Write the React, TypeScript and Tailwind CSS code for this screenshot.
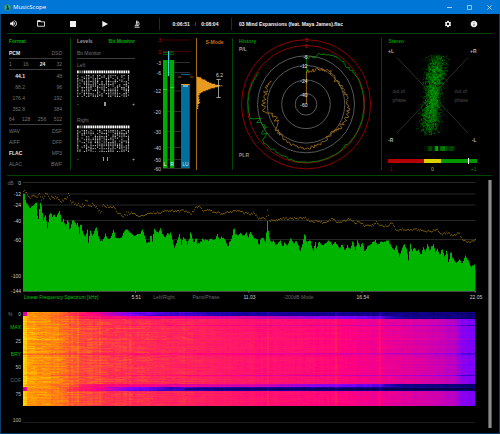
import React, { useMemo, useState } from 'react';
import { MdVolumeUp, MdSettings, MdInfo } from 'react-icons/md';
import clsx from 'clsx';

type Point = [number, number];

// Small seeded generator so every render draws the same signal
function createRandom(seed: number) {
  let s = seed;
  return () => {
    s = (s * 1664525 + 1013904223) % 4294967296;
    return s / 4294967296;
  };
}

function interpolate(points: Point[], x: number) {
  if (x <= points[0][0]) return points[0][1];
  for (let i = 1; i < points.length; i++) {
    const [x1, y1] = points[i];
    if (x <= x1) {
      const [x0, y0] = points[i - 1];
      return y0 + ((y1 - y0) * (x - x0)) / (x1 - x0);
    }
  }
  return points[points.length - 1][1];
}

/* ------------------------------ Title bar ------------------------------ */

const TitleBar = () => (
  <header className="flex h-[14px] items-center bg-[#0077d6] text-white">
    <svg viewBox="0 0 12 12" className="ml-1 h-[7px] w-[7px]" aria-hidden="true">
      <circle cx="6" cy="6" r="6" fill="#2b8f86" />
      <path d="M5 1.5 7 3v3l2 2-1 2H4l1-3-1-2z" fill="#0c3a3a" />
      <path d="M2 4l2 1-1 3M8 3l2 2" stroke="#7fd6b0" strokeWidth="1" fill="none" />
    </svg>
    <h1 className="ml-[2px] font-['Open_Sans',sans-serif] text-[6px] leading-[8px]">MusicScope</h1>
    <div className="ml-auto mr-px flex">
      <button aria-label="Minimize" className="flex h-[14px] w-5 items-center justify-center">
        <svg viewBox="0 0 5 5" className="h-[5px] w-[5px]"><path d="M0 2.5h5" stroke="#cfe6fa" strokeWidth="0.8" /></svg>
      </button>
      <button aria-label="Maximize" className="flex h-[14px] w-5 items-center justify-center">
        <svg viewBox="0 0 5 5" className="h-[5px] w-[5px]"><path d="M.5.5h4v4h-4z" fill="none" stroke="#cfe6fa" strokeWidth="0.7" /></svg>
      </button>
      <button aria-label="Close" className="flex h-[14px] w-5 items-center justify-center">
        <svg viewBox="0 0 5 5" className="h-[5px] w-[5px]"><path d="M.3.3l4.4 4.4M4.7.3.3 4.7" stroke="#e4f1fc" strokeWidth="0.7" /></svg>
      </button>
    </div>
  </header>
);

/* ------------------------------- Toolbar ------------------------------- */

const FolderIcon = () => (
  <svg viewBox="0 0 16 14" className="h-[7px] w-2" aria-hidden="true">
    <path d="M1 12.5V1.5h5.5l1.6 2.2H15v8.8z" fill="none" stroke="currentColor" strokeWidth="1.7" />
    <path d="M1 1h5.5l1.8 3H1z" fill="currentColor" />
  </svg>
);

const MicroscopeIcon = () => (
  <svg viewBox="0 0 14 18" className="h-2 w-[6px]" aria-hidden="true">
    <path d="M6.5 1v7M9 3c3.5 2 3.5 7 1 9.5M3.5 9.5h6M2 12.8h9M1 16.5h12" fill="none" stroke="currentColor" strokeWidth="2" />
    <path d="M5 2.5h3.4V8H5z" fill="currentColor" />
  </svg>
);

const Toolbar = () => (
  <div className="flex h-[19px] items-center text-[#f2f2f2]">
    <button aria-label="Volume" className="flex w-6 justify-center"><MdVolumeUp size={9} /></button>
    <button aria-label="Open file" className="flex w-8 justify-center"><FolderIcon /></button>
    <button aria-label="Stop" className="flex w-8 justify-center">
      <svg viewBox="0 0 6 6" className="h-[6px] w-[6px]" aria-hidden="true"><path d="M0 0h6v6H0z" fill="currentColor" /></svg>
    </button>
    <button aria-label="Play" className="flex w-8 justify-center">
      <svg viewBox="0 0 6 6" className="h-[6px] w-[6px]" aria-hidden="true"><path d="M.3 0 6 3 .3 6z" fill="currentColor" /></svg>
    </button>
    <button aria-label="Analyze" className="flex w-8 justify-center"><MicroscopeIcon /></button>
    <div className="ml-[6px] flex h-3 w-[73px] items-center justify-center gap-[5px] border-x border-[#004600] font-bold">
      <span>0:06:51</span>
      <span className="font-normal text-[#aaa]">/</span>
      <span>0:08:04</span>
    </div>
    <p className="truncate pl-[7px] font-bold">03 Mind Expansions (feat. Maya James).flac</p>
    <div className="ml-auto mr-3 flex">
      <button aria-label="Settings" className="flex w-[26px] justify-center"><MdSettings size={8} /></button>
      <button aria-label="About" className="flex w-[26px] justify-center"><MdInfo size={8} /></button>
    </div>
  </div>
);

/* -------------------------------- Format ------------------------------- */

const formatRows: { cells: string[]; active?: string; line?: boolean; rates?: boolean }[] = [
  { cells: ['PCM', 'DSD'], active: 'PCM', line: true },
  { cells: ['1', '16', '24', '32'], active: '24', line: true },
  { cells: ['44.1', '48'], active: '44.1', rates: true },
  { cells: ['88.2', '96'], rates: true },
  { cells: ['176.4', '192'], rates: true },
  { cells: ['352.8', '384'], rates: true },
  { cells: ['64', '128', '256', '512'], line: true },
  { cells: ['WAV', 'DSF'] },
  { cells: ['AIFF', 'DFF'] },
  { cells: ['FLAC', 'MP3'], active: 'FLAC' },
  { cells: ['ALAC', 'BWF'] },
];

const FormatPanel = () => (
  <section className="min-w-0 border-r border-[#004600] pl-[2px] pr-2">
    <h2 className="mb-[3px] h-[7px] font-bold text-[#00b000]">Format</h2>
    {formatRows.map((row) => (
      <div
        key={row.cells.join()}
        className={clsx('flex h-[11px] items-center justify-between', row.line && 'border-b border-[#3c3c3c]')}
      >
        {row.cells.map((cell, i) => (
          <span
            key={cell}
            className={clsx(
              row.rates && i === 0 && 'w-4 text-right',
              cell === row.active ? 'font-bold text-[#e6e6e6]' : 'text-[#727272]'
            )}
          >
            {cell}
          </span>
        ))}
      </div>
    ))}
  </section>
);

/* ----------------------------- Bit monitor ----------------------------- */

const BitChannel = ({ name, seed, marks }: { name: string; seed: number; marks: number[] }) => {
  const dots = useMemo(() => {
    const rand = createRandom(seed);
    const out: { x: number; y: number; o: number }[] = [];
    for (let c = 0; c < 24; c++) {
      const density = c === 0 ? 0.95 : c < 3 ? 0.4 : 0.5 + rand() * 0.35;
      for (let r = 0; r < 15; r++) {
        if (rand() < density) out.push({ x: c * 2.2 + 0.2, y: 5 + r * 1.5, o: 0.5 + rand() * 0.5 });
      }
    }
    return out;
  }, [seed]);

  return (
    <div className="mb-[3px]">
      <h3 className="flex h-[11px] items-center text-[#727272]">{name}</h3>
      <svg viewBox="0 0 53 27" className="block w-11/12" role="img" aria-label={`${name} bits`}>
        {Array.from({ length: 24 }, (_, i) => (
          <rect key={i} x={i * 2.2 + 0.1} y="0.5" width="1.6" height="2.8" fill={i > 0 && i < 3 ? '#888' : '#fff'} />
        ))}
        {dots.map((d, i) => (
          <rect key={i} x={d.x} y={d.y} width="1.1" height="1.1" fill="#eee" opacity={d.o} />
        ))}
      </svg>
      <div className="flex h-[14px] items-center justify-between text-[#bbb]">
        <span>-</span>
        <span className="flex gap-[3px]">
          {marks.map((w, i) => (
            <i key={i} className={clsx('h-1 bg-[#999]', w === 2 ? 'w-[2px]' : 'w-px')} />
          ))}
        </span>
        <span>+</span>
      </div>
    </div>
  );
};

const BitMonitorPanel = () => {
  const [tab, setTab] = useState<'levels' | 'bits'>('bits');
  return (
    <section className="min-w-0 pl-[6px] pr-3">
      <div className="mb-[3px] flex h-[7px] items-start justify-between font-bold">
        <button onClick={() => setTab('levels')} className={tab === 'levels' ? 'text-[#00b000]' : 'text-[#999]'}>Levels</button>
        <button onClick={() => setTab('bits')} className={tab === 'bits' ? 'text-[#00b000]' : 'text-[#999]'}>Bit Monitor</button>
      </div>
      <p className="flex h-[11px] items-center border-b border-[#3c3c3c] text-[#727272]">Bit Monitor</p>
      <BitChannel name="Left" seed={11} marks={[2]} />
      <BitChannel name="Right" seed={47} marks={[1, 1]} />
    </section>
  );
};

/* -------------------------------- Meters ------------------------------- */

const meterScale: { label: string; y: number }[] = [
  { label: '3', y: 40 },
  { label: '0', y: 51.5 },
  { label: '-3', y: 62.5 },
  { label: '-6', y: 72.5 },
  { label: '-12', y: 91 },
  { label: '-20', y: 111.5 },
  { label: '-30', y: 131.5 },
  { label: '-40', y: 147.5 },
  { label: '-50', y: 159.5 },
  { label: '-60', y: 168.5 },
];

const Meters = () => (
  <svg viewBox="147 38 49 132" className="block w-full overflow-visible" role="img" aria-label="Level meters">
    {meterScale.map((m, i) => (
      <g key={m.label}>
        <path d={`M163 ${m.y}H190`} stroke={i < 2 ? '#5c0000' : '#3a3a3a'} strokeWidth="0.8" />
        <text x="161" y={m.y + 2} textAnchor="end" fill={i < 2 ? '#d00000' : '#ccc'}>{m.label}</text>
      </g>
    ))}
    <path d="M163 60h4.4v108H163zM170 60h4.2v108H170z" fill="#00aa00" />
    <path d="M163 52.4h4.4M163 54.4h4.4M170 52h4.2M170 54.2h4.2" stroke="#00a000" strokeWidth="0.7" />
    <path d="M163 89.4h4.4M170 87.4h4.2" stroke="#30f030" strokeWidth="0.8" />
    <path d="M168.6 51v25" stroke="#4cc8f0" strokeWidth="1.3" />
    <path d="M181 84.5h8.8V168H181z" fill="#006f9c" />
    <path d="M181 84.5h8.8" stroke="#e89a20" strokeWidth="1" />
    <path d="M183 86h5" stroke="#e0e8ea" strokeWidth="1" />
    <path d="M181 74.4h8.8" stroke="#006f9c" strokeWidth="1" />
    <path d="M178 77h3.4M190 77h3.4" stroke="#8a5510" strokeWidth="1.2" />
    <text x="163.6" y="166" fill="#f4f4f4">L</text>
    <text x="170.2" y="166" fill="#f4f4f4">R</text>
    <text x="185.4" y="166" textAnchor="middle" fill="#dcebf2">LU</text>
  </svg>
);

const SMode = () => (
  <div className="min-w-0 border-l border-[#a86a14]">
    <button className="block h-2 w-full text-center font-bold text-[#b87416]">S-Mode</button>
    <svg viewBox="197 46 35 122" className="block w-full" role="img" aria-label="Loudness distribution">
      <path
        d="M196.5 76.7h1.5l1 .6h2v1.3h1.5v1h3v1.1h1.4v1h2v1h2.6v1h3.6v1h3.4v.8h4v.8h-3.6v1h-4.2v1h-4v1h-2.4v1h-2.6v1h-2.8v1h-1.6v1h-2v1h.6v1h-1.4v1.4h.8v1.2h-.6v1.4h1.2v1.2h-.9v1.4h1.2v1h-1v1h-1.4v1.4h.8v1.3h-1v1h.6v1.4h-1.3v1.4h-1.9z"
        fill="#e89a20"
      />
      <path d="M218.5 79.5v18M216.4 79.5h4.4M216.4 97.5h4.4M217 85.5h3" stroke="#b8b8b8" strokeWidth="0.8" />
      <text x="219.6" y="77.4" textAnchor="middle" fill="#d8d8d8">6.2</text>
    </svg>
  </div>
);

/* ------------------------------- History ------------------------------- */

const CX = 306;
const CY = 104.3;

// [angle in degrees, radius, jitter]
const peakTrace: [number, number, number][] = [
  [0, 46, 1], [5, 47, 3], [11, 48, 4], [13, 52, 1], [24, 54, 1.5], [30, 56, 1], [38, 56, 1.5], [48, 55.5, 2.5], [55, 57, 1.5],
  [65, 58, 0.4], [132, 58, 0.4], [136, 56.5, 1.5], [142, 58, 0.4], [190, 58, 0.4], [200, 57, 1.5], [215, 56, 1.2], [230, 57, 1.5],
  [233, 52, 5], [240, 48, 5], [246, 50, 5], [253, 50, 5], [255, 57.5, 0.5], [280, 58, 0.4], [304, 57, 0.4],
];
const loudnessTrace: [number, number, number][] = [
  [0, 33, 2], [10, 34, 3], [25, 39, 3], [40, 41, 3], [50, 38, 3], [65, 40, 2], [85, 41.5, 2.5], [105, 43, 3], [125, 41, 3],
  [140, 39, 3.5], [160, 42, 2.5], [180, 44.5, 2], [200, 42.5, 2], [220, 40, 2.5], [232, 39, 3], [240, 33, 4], [252, 34, 3],
  [256, 38, 4], [260, 43, 3], [275, 42, 3], [290, 43, 4], [304, 43, 2],
];

function polarPath(trace: [number, number, number][], seed: number) {
  const rand = createRandom(seed);
  const radius = trace.map(([a, r]) => [a, r] as Point);
  const jitter = trace.map(([a, , j]) => [a, j] as Point);
  const last = trace[trace.length - 1][0];
  const parts: string[] = [];
  for (let a = 0; a <= last; a += 1.6) {
    const r = interpolate(radius, a) + (rand() - 0.5) * interpolate(jitter, a) * 1.4;
    const t = (a * Math.PI) / 180;
    parts.push(`${(CX + r * Math.sin(t)).toFixed(1)} ${(CY - r * Math.cos(t)).toFixed(1)}`);
  }
  return 'M' + parts.join('L');
}

const rings = [
  { label: '3', r: 64.6, y: 40 },
  { label: '0', r: 58.8, y: 46 },
  { label: '-6', r: 48.5, y: 56.5 },
  { label: '-12', r: 38.8, y: 66 },
  { label: '-24', r: 24.3, y: 80.5 },
  { label: '-40', r: 10.8, y: 94.5 },
  { label: '-60', r: 0, y: 104.8 },
];

const HistoryPanel = () => {
  const peak = useMemo(() => polarPath(peakTrace, 5), []);
  const loudness = useMemo(() => polarPath(loudnessTrace, 9), []);
  return (
    <section className="min-w-0 border-r border-[#004600]">
      <svg viewBox="233 38 148 132" className="block w-full" role="img" aria-label="History">
        <text x="239" y="43" className="font-bold" fill="#009400">History</text>
        <text x="239" y="51" className="font-bold" fill="#a0a0a0">P/L</text>
        <text x="239" y="157" className="font-bold" fill="#8c8c8c">PLR</text>
        {rings.map((ring, i) => (
          <circle key={ring.label} cx={CX} cy={CY} r={ring.r} fill="none" stroke={i < 2 ? '#900000' : '#585858'} strokeWidth="1" />
        ))}
        <path d="M306.4 57v24" stroke="#007800" strokeWidth="0.9" />
        <path d="M306.4 72v32" stroke="#a87018" strokeWidth="0.9" />
        <path d={peak} fill="none" stroke="#009c00" strokeWidth="0.8" />
        <path d={loudness} fill="none" stroke="#b07618" strokeWidth="0.8" />
        {rings.map((ring, i) => (
          <text key={ring.label} x="307.6" y={ring.y + 2} textAnchor="end" fill={i < 2 ? '#e00000' : '#e6e6e6'}>{ring.label}</text>
        ))}
      </svg>
    </section>
  );
};

/* -------------------------------- Stereo ------------------------------- */

function gonioPoints() {
  const rand = createRandom(77);
  const gauss = () => (rand() + rand() + rand() + rand() - 2) / 2;
  const groups = ['', '', ''];
  for (let i = 0; i < 2900; i++) {
    const t = gauss() * 1.15 + (rand() < 0.5 ? -0.45 : 0.42);
    if (Math.abs(t) > 1) continue;
    const waist = 10.5 + 6 * Math.abs(t) * (1.35 - Math.abs(t));
    const x = 432.9 - t * 4.4 + gauss() * waist * 1.25;
    const y = 95 + t * 40;
    groups[i % 3] += `M${x.toFixed(1)} ${y.toFixed(1)}h.7`;
  }
  return groups;
}

const StereoPanel = () => {
  const groups = useMemo(gonioPoints, []);
  const bars = useMemo(() => {
    const rand = createRandom(21);
    return Array.from({ length: 27 }, (_, i) => ({
      x: 424.4 + i * 1.15,
      o: Math.max(0.12, (1.2 - Math.abs(i - 13) / 14) * (rand() < 0.3 ? 0.15 : 0.5 + rand() * 0.5)),
    }));
  }, []);
  return (
    <section className="min-w-0">
      <svg viewBox="382 38 110 132" className="block w-full overflow-visible" role="img" aria-label="Stereo">
        <text x="388.5" y="43" className="font-bold" fill="#009400">Stereo</text>
        <path d="M397 57.5 468 133M468 57.5 397 133" stroke="#363636" strokeWidth="0.8" />
        <g className="font-bold" fill="#b4b4b4">
          <text x="388" y="53">+L</text>
          <text x="476.5" y="53" textAnchor="end">+R</text>
          <text x="388" y="141.5">-R</text>
          <text x="476.5" y="141.5" textAnchor="end">-L</text>
        </g>
        <g fill="#4c4c4c">
          <text x="392.5" y="93">out of</text>
          <text x="392.5" y="102">phase</text>
          <text x="454.5" y="93">out of</text>
          <text x="454.5" y="102">phase</text>
        </g>
        <path d={groups[0]} stroke="#009c00" strokeWidth="0.7" />
        <path d={groups[1]} stroke="#007000" strokeWidth="0.7" />
        <path d={groups[2]} stroke="#00c800" strokeWidth="0.6" opacity="0.8" />
        {bars.map((b) => (
          <rect key={b.x} x={b.x} y="146" width="0.9" height="5" fill="#00e000" opacity={b.o} />
        ))}
        <path d="M388 159h36v4h-36z" fill="#b40000" />
        <path d="M424 159h17v4h-17z" fill="#dcd000" />
        <path d="M441 159h36v4h-36z" fill="#009600" />
        <path d="M468.5 158v6" stroke="#fff" strokeWidth="1" />
        <text x="388" y="170.5" fill="#b00000">-1</text>
        <text x="432.5" y="170.5" textAnchor="middle" fill="#c8be00">0</text>
        <text x="476.5" y="170.5" textAnchor="end" fill="#009000">+1</text>
      </svg>
    </section>
  );
};

/* ------------------------------- Spectrum ------------------------------ */

// Control points for the live spectrum, three units per pixel
const spectrumPoints: Point[] = [
  [68, 68], [73, 64], [76, 85], [82, 100], [90, 108], [98, 102], [104, 96], [109, 90], [112, 130], [115, 143], [120, 92], [124, 100],
  [130, 145], [136, 128], [142, 170], [148, 130], [152, 122], [158, 135], [162, 128], [168, 138], [174, 122], [179, 116], [184, 150],
  [190, 143], [197, 165], [203, 138], [209, 178], [215, 150], [221, 142], [228, 158], [233, 150], [238, 185], [242, 150], [248, 182],
  [256, 195], [262, 175], [265, 210], [270, 176], [278, 190], [284, 175], [290, 165], [294, 190], [300, 205], [308, 208], [316, 185],
  [322, 200], [332, 198], [340, 172], [346, 195], [355, 200], [365, 195], [372, 178], [380, 170], [386, 180], [395, 185], [403, 193],
  [412, 185], [420, 185], [428, 172], [434, 195], [440, 215], [448, 210], [453, 178], [456, 214], [462, 170], [468, 180], [474, 182],
  [482, 168], [488, 190], [496, 195], [502, 185], [508, 188], [512, 180], [517, 205], [524, 228], [530, 210], [538, 188], [544, 218],
  [550, 195], [556, 200], [562, 215], [568, 200], [572, 178], [578, 205], [582, 215], [588, 195], [592, 215], [600, 212], [608, 200],
  [618, 205], [626, 205], [634, 200], [644, 205], [652, 188], [660, 205], [664, 195], [672, 200], [678, 210], [683, 228], [688, 208],
  [696, 200], [701, 162], [706, 185], [714, 190], [722, 182], [730, 192], [738, 180], [744, 200], [750, 178], [756, 190], [764, 200],
  [772, 205], [777, 225], [782, 200], [790, 198], [796, 210], [802, 148], [808, 200], [814, 210], [820, 205], [828, 220], [840, 205],
  [848, 225], [854, 210], [862, 220], [872, 200], [880, 215], [890, 205], [900, 238], [908, 215], [914, 180], [920, 212], [930, 205],
  [940, 238], [946, 210], [950, 235], [956, 205], [966, 222], [976, 215], [986, 205], [998, 220], [1006, 210], [1018, 232], [1026, 215],
  [1034, 235], [1042, 220], [1050, 235], [1058, 205], [1066, 235], [1072, 207], [1080, 225], [1088, 210], [1094, 240], [1102, 225],
  [1114, 215], [1126, 205], [1134, 220], [1142, 208], [1154, 210], [1164, 205], [1174, 225], [1184, 235], [1188, 215], [1198, 255],
  [1206, 230], [1212, 215], [1220, 235], [1226, 272], [1230, 208], [1236, 240], [1242, 225], [1250, 240], [1256, 232], [1262, 250],
  [1270, 225], [1276, 240], [1282, 215], [1288, 235], [1294, 225], [1300, 215], [1306, 240], [1312, 232], [1320, 250], [1326, 230],
  [1334, 255], [1340, 232], [1346, 275], [1352, 235], [1358, 260], [1370, 275], [1380, 262], [1386, 275], [1396, 250], [1406, 270],
  [1414, 285], [1422, 275], [1426, 290],
];

const maxPoints: Point[] = [
  [68, 65], [72, 50], [78, 62], [90, 75], [105, 72], [118, 68], [125, 85], [140, 62], [150, 78], [165, 75], [180, 88], [195, 82],
  [205, 70], [215, 90], [235, 100], [250, 102], [257, 88], [265, 95], [285, 103], [300, 120], [312, 98], [325, 105], [340, 102],
  [350, 118], [368, 135], [380, 125], [395, 122], [415, 132], [432, 133], [450, 122], [480, 122], [500, 115], [525, 118], [550, 116],
  [575, 125], [585, 108], [597, 103], [610, 118], [625, 112], [640, 120], [670, 125], [690, 120], [710, 115], [730, 122], [750, 127],
  [760, 122], [775, 138], [798, 140], [802, 112], [808, 145], [830, 145], [850, 140], [880, 140], [915, 137], [930, 148], [955, 148],
  [975, 155], [995, 140], [1015, 152], [1050, 140], [1065, 155], [1075, 148], [1095, 162], [1120, 160], [1128, 150], [1145, 162],
  [1165, 162], [1172, 150], [1190, 175], [1210, 172], [1225, 175], [1250, 172], [1270, 178], [1295, 178], [1310, 172], [1325, 188],
  [1340, 182], [1360, 192], [1375, 182], [1390, 205], [1410, 212], [1426, 203],
];

const dbLines = [
  { label: '0', y: 182.5, line: true },
  { label: '-12', y: 194, line: true },
  { label: '-24', y: 205, line: true },
  { label: '-40', y: 220.5, line: true },
  { label: '-60', y: 239.5, line: true },
  { label: '-100', y: 276, line: false },
  { label: '-144', y: 290.5, line: false },
];

function buildSpectrum() {
  const rand = createRandom(3);
  let area = 'M23 291';
  let dots = '';
  for (let x = 23; x < 475.5; x++) {
    const y = 172 + interpolate(spectrumPoints, x * 3 + 1) / 3 + (rand() - 0.5) * 1.6;
    area += `V${y.toFixed(1)}H${x + 1 > 475.5 ? 475.5 : x + 1}`;
    const spread = x < 130 ? 4 : 2;
    const m = 172 + interpolate(maxPoints, x * 3 + 1) / 3 + (rand() - 0.5) * spread;
    dots += `M${x} ${m.toFixed(1)}h1`;
  }
  return { area: area + 'V291z', dots };
}

const SpectrumChart = () => {
  const { area, dots } = useMemo(buildSpectrum, []);
  return (
    <svg viewBox="7 180 470 112" className="block w-full overflow-visible" role="img" aria-label="Linear frequency spectrum">
      <text x="7.5" y="184.5" fill="#6c6c6c">dB</text>
      {dbLines.map((l) => (
        <g key={l.label}>
          {l.line && <path d={`M23 ${l.y}H475.5`} stroke="#262626" strokeWidth="1" />}
          <text x="21" y={l.y + 2} textAnchor="end" fill="#ccc">{l.label}</text>
        </g>
      ))}
      <path d={area} fill="#00b400" />
      <path d={dots} stroke="#8a6408" strokeWidth="0.9" />
      <path d="M23 291.3H475.5M135.5 291v2M249 291v2M362 291v2M475.2 291v2" stroke="#8a9a8a" strokeWidth="0.6" />
    </svg>
  );
};

const SpectrumAxis = () => (
  <div className="grid h-[9px] grid-cols-4 pl-4 pr-px text-[#686868]">
    <div className="flex items-center justify-between pl-px">
      <button className="whitespace-nowrap text-[#00c800]">Linear Frequency Spectrum [kHz]</button>
      <span className="translate-x-1/2 text-[#ccc]">5.51</span>
    </div>
    <div className="flex items-center justify-between pl-[17px]">
      <button>Left/Right</button>
      <button>Pans/Phase</button>
      <span className="translate-x-1/2 text-[#ccc]">11.03</span>
    </div>
    <div className="flex items-center justify-between pl-[34px]">
      <button>-200dB Mode</button>
      <span className="translate-x-1/2 text-[#ccc]">16.54</span>
    </div>
    <div className="flex items-center justify-end">
      <span className="translate-x-1/2 text-[#ccc]">22.05</span>
    </div>
  </div>
);

/* ------------------------------ Spectrogram ---------------------------- */

const heatStops: [number, number[]][] = [
  [0, [0, 0, 70]],
  [0.15, [24, 0, 165]],
  [0.3, [122, 0, 255]],
  [0.45, [190, 0, 190]],
  [0.6, [255, 0, 128]],
  [0.75, [255, 48, 78]],
  [0.85, [255, 108, 34]],
  [0.93, [255, 158, 0]],
  [1, [255, 216, 0]],
];

function heatColor(v: number) {
  const rgb = [0, 1, 2].map((c) => Math.round(interpolate(heatStops.map(([s, k]) => [s, k[c]] as Point), v)));
  return `rgb(${rgb.join(',')})`;
}

const bodyLevel: Point[] = [
  [0, 1], [2, 0.98], [4, 0.94], [17, 0.91], [37, 0.875], [47, 0.82], [77, 0.775], [107, 0.745], [157, 0.715], [227, 0.66],
  [297, 0.63], [350, 0.57], [407, 0.5], [430, 0.44], [438, 0.34], [453, 0.3],
];
const quietLevel: Point[] = [
  [0, 0.5], [2, 0.55], [3, 0.92], [35, 0.86], [55, 0.7], [80, 0.52], [105, 0.3], [150, 0.2], [220, 0.14], [453, 0.07],
];
const fadeLevel: Point[] = [
  [0, 0.98], [5, 0.92], [45, 0.82], [65, 0.65], [140, 0.56], [227, 0.5], [290, 0.35], [350, 0.25], [380, 0.1], [453, 0.06],
];

const ROWS = 94;
const COLS = 226;
const LEVELS = 48;

// Cells are grouped by colour, one path each, with equal neighbours merged
function buildHeatmap() {
  const rand = createRandom(123);
  const paths: string[] = Array(LEVELS + 1).fill('');
  const colShift = Array.from({ length: COLS }, () => (rand() - 0.5) * 0.03);
  [17, 24, 27, 38, 53, 62].forEach((c) => (colShift[c] += 0.03));
  [80, 155, 177].forEach((c) => (colShift[c] += 0.025));
  [122, 156, 178].forEach((c) => (colShift[c] += 0.055));
  for (let r = 0; r < ROWS; r++) {
    let rowShift = (rand() - 0.5) * 0.04;
    if (r === 13 || r === 41 || r === 63) rowShift -= 0.12;
    if (r === 42) rowShift -= 0.05;
    const quiet = r < 4 || (r >= 75 && r < 79);
    const fade = (r >= 4 && r < 7) || (r >= 72 && r < 75);
    const table = quiet ? quietLevel : fade ? fadeLevel : bodyLevel;
    let streak = 0;
    let start = 0;
    let prev = -1;
    for (let c = 0; c <= COLS; c++) {
      let level = -1;
      if (c < COLS) {
        if (rand() < 0.35) streak = (rand() - 0.5) * (c < 90 ? 0.07 : 0.03);
        let v = interpolate(table, c * 2) + streak + colShift[c];
        v += r === 13 || r === 41 || r === 63 ? rowShift * Math.min(1, 0.3 + c / 160) : rowShift;
        if (r >= 76 && r < 78 && c > 80) v -= 0.08;
        level = Math.round(Math.max(0, Math.min(1, v)) * LEVELS);
      }
      if (level !== prev) {
        if (prev >= 0) paths[prev] += `M${start * 2} ${r}h${(c - start) * 2}v1h-${(c - start) * 2}z`;
        start = c;
        prev = level;
      }
    }
  }
  return paths;
}

const Spectrogram = () => {
  const paths = useMemo(buildHeatmap, []);
  return (
    <svg viewBox="0 0 454 111" className="mt-px block min-w-0 flex-1 self-start" shapeRendering="crispEdges" role="img" aria-label="Spectrogram">
      {paths.map((d, i) => d && <path key={i} d={d} fill={heatColor(i / LEVELS)} />)}
      <path d="M0 110h452v1H0z" fill="#1c1c1c" />
    </svg>
  );
};

const SpectrogramLabels = () => (
  <div className="flex w-4 flex-col items-end justify-between pr-[2px] text-[#bbb]">
    <div className="flex w-full justify-between pl-px"><span className="text-[#777]">%</span><span>0</span></div>
    <button className="text-[#00c000]">MAX</button>
    <span>25</span>
    <button className="text-[#00c000]">BRY</button>
    <span>50</span>
    <button className="text-[#686868]">COF</button>
    <span>75</span>
    <span aria-hidden="true">&nbsp;</span>
    <span>100</span>
  </div>
);

/* --------------------------------- App --------------------------------- */

function App() {
  return (
    <div className="flex min-h-screen flex-col bg-black font-['Liberation_Sans',Arial,sans-serif] text-[5px] leading-[6px] text-[#eee]">
      <TitleBar />
      <div className="flex flex-grow flex-col border-x border-b border-[#0a3d6b]">
        <Toolbar />
        <main className="pl-[6px] pr-[7px]">
          <div className="grid grid-cols-[64fr_76fr_86fr_149fr_110fr] border-y border-[#004600] pb-[5px] pt-1">
            <FormatPanel />
            <BitMonitorPanel />
            <section className="grid min-w-0 grid-cols-[49fr_36fr] border-r border-[#004600]">
              <Meters />
              <SMode />
            </section>
            <HistoryPanel />
            <StereoPanel />
          </div>

          <div className="flex gap-[11px] pt-1">
            <div className="min-w-0 flex-1 pb-[5px]">
              <SpectrumChart />
              <SpectrumAxis />
              <div className="mt-[10px] flex">
                <SpectrogramLabels />
                <Spectrogram />
              </div>
            </div>
            <div className="w-1 border-x border-[#555] bg-[#8c8c8c]" />
          </div>
        </main>
      </div>
    </div>
  );
}

export default App;
